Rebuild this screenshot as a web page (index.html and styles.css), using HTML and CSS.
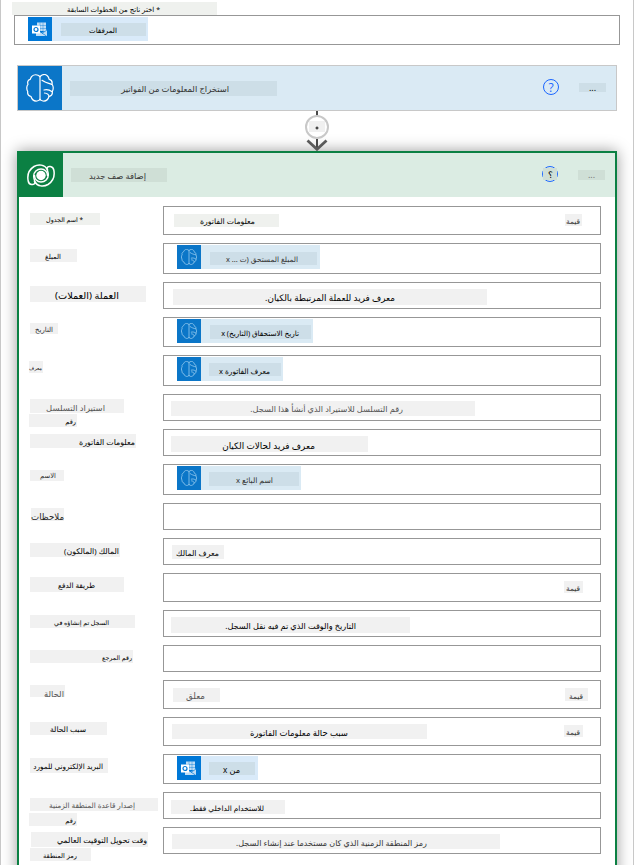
FILE: index.html
```html
<!DOCTYPE html>
<html lang="ar">
<head>
<meta charset="utf-8">
<title>إضافة صف جديد</title>
<link rel="stylesheet" href="styles.css">
</head>
<body>
<svg class="defs" width="0" height="0">
  <defs>
    <symbol id="brain" viewBox="0 0 28 28">
      <g fill="none" stroke="currentColor" stroke-linecap="round" stroke-linejoin="round">
        <path d="M14 2.500V26"/>
        <path d="M14 2.500C11.500.2 8 .2 6 2.200 4.800 3.300 4.600 4.700 4.200 5.300 1.800 6 1.200 8 2 10.300.4 12 .4 15.500 1.800 17.700 1.200 20 2.500 21.800 5 22.500 6 26 8.500 27.300 11 27 12.600 26.700 13.400 26.300 14 25.300"/>
        <path d="M14 2.500C16.500.2 19.500.2 21.300 1.800 23 3.300 23 4.500 23 5.200 25.800 6 26.500 8 26 10.300 27.600 12 27.600 15.500 26.200 17.700 26.800 20 25.500 21.800 23 22.500 22 26 19.500 27.300 17 27 15.400 26.700 14.600 26.300 14 25.300"/>
        <path d="M16 6.300C19 8.500 22 9.200 26 10.300M26.200 17.700C23 15.500 20.500 15.300 18 16M23 22.500C22.800 20.300 21 19.200 18.500 19"/>
      </g>
    </symbol>
    <symbol id="outlook" viewBox="0 0 16 15">
      <path d="M5 .5H14V9H5Z" fill="#fff" fill-opacity=".75"/>
      <path d="M5 3.500H14M5 6.500H14M8 .5V9M11 .5V9" stroke="#0078d7" stroke-width=".4"/>
      <path d="M4 8 9.500 11 15 7.500V14H4Z" fill="#fff" fill-opacity=".75"/>
      <path d="M9.500 10.800 14.500 14M15 8 10 11.300" stroke="#0078d7" stroke-width=".7"/>
      <path d="M0 3.500H8V11.500H0Z" fill="#fff"/>
      <circle cx="4" cy="7.500" r="2" fill="none" stroke="#0078d7" stroke-width="1.200"/>
    </symbol>
  </defs>
</svg>

<main class="frame">
  <div class="chip top">* اختر ناتج من الخطوات السابقة</div>
  <div class="input picker">
    <div class="token mail">
      <span class="icon"><svg class="mail-glyph"><use href="#outlook"/></svg></span>
      <div class="chip att">المرفقات</div>
    </div>
  </div>

  <section class="card extract">
    <header class="head">
      <span class="logo"><svg class="logo-glyph"><use href="#brain"/></svg></span>
      <div class="chip c1">استخراج المعلومات من الفواتير</div>
      <span class="help">?</span>
      <div class="more">...</div>
    </header>
  </section>

  <div class="arrow">
    <svg width="24" height="40" viewBox="0 0 24 40">
      <path d="M12 0V5M12 28V38" stroke="#484848" stroke-width="2"/>
      <path d="M2.500 29.500 12 38.300 21.500 29.500" fill="none" stroke="#5a5a5a" stroke-width="2.800"/>
      <circle cx="12" cy="16" r="11" fill="#fff" stroke="#c8c8c8" stroke-width="2"/>
      <path d="M4 10H20V21H4Z" fill="#f0f0f0"/>
      <path d="M12 15.500V18.500M10.500 17H13.500" stroke="#111" stroke-width="1"/>
    </svg>
  </div>

  <section class="card addrow">
    <header class="head">
      <span class="logo">
        <svg width="28" height="23" viewBox="0 0 28 23" fill="none" stroke="#fff" stroke-width="1.500" stroke-linecap="round" stroke-linejoin="round">
          <path d="M20.500 5.500C17.500.5 11.500-.2 7 2.500 1.500 6 .2 12 1.200 17 2 21.500 7.500 21.500 8 18.500 8.100 17 6.700 15.500 6.700 12 6.700 8 10 5 14 5 18 5 20.500 8 20.500 11.500"/>
          <path d="M7.500 17.500C10.500 22.500 16.500 23.200 21 20.500 26.500 17 27.800 11 26.800 6 26 1.500 20.500 1.500 20 4.500 19.900 6 21.300 7.500 21.300 11 21.300 15 18 18 14 18 10 18 7.500 15 7.500 11.500"/>
          <circle cx="14" cy="11.500" r="4.700" fill="#fff" stroke="none"/>
        </svg>
      </span>
      <div class="chip c2">إضافة صف جديد</div>
      <span class="help veiled"><span>؟</span></span>
      <div class="more">...</div>
    </header>

    <div class="form">
      <div class="row tall">
        <div class="labels"><div class="chip l1">* اسم الجدول</div></div>
        <div class="input"><div class="chip v1">معلومات الفاتورة</div><div class="chip hint q1">قيمة</div></div>
      </div>
      <div class="row token-row">
        <div class="labels"><div class="chip l2">المبلغ</div></div>
        <div class="input"><div class="token k2"><span class="icon"><svg class="brain-glyph"><use href="#brain"/></svg></span><div class="chip v2">المبلغ المستحق (ت ... x</div></div></div>
      </div>
      <div class="row">
        <div class="labels"><div class="chip l3">العملة (العملات)</div></div>
        <div class="input"><div class="chip v3">معرف فريد للعملة المرتبطة بالكيان.</div></div>
      </div>
      <div class="row mid">
        <div class="labels"><div class="chip l4">التاريخ</div></div>
        <div class="input"><div class="token k4"><span class="icon"><svg class="brain-glyph"><use href="#brain"/></svg></span><div class="chip v4">تاريخ الاستحقاق (التاريخ) x</div></div></div>
      </div>
      <div class="row token-row">
        <div class="labels"><div class="chip l5">معرف</div></div>
        <div class="input"><div class="token k5"><span class="icon"><svg class="brain-glyph"><use href="#brain"/></svg></span><div class="chip v5">معرف الفاتورة x</div></div></div>
      </div>
      <div class="row">
        <div class="labels"><div class="chip l6 soft">استيراد التسلسل</div><div class="chip number">رقم</div></div>
        <div class="input"><div class="chip v6 soft">رقم التسلسل للاستيراد الذي أنشأ هذا السجل.</div></div>
      </div>
      <div class="row">
        <div class="labels"><div class="chip l7">معلومات الفاتورة</div></div>
        <div class="input"><div class="chip v7">معرف فريد لحالات الكيان</div></div>
      </div>
      <div class="row token-row">
        <div class="labels"><div class="chip l8">الاسم</div></div>
        <div class="input"><div class="token k8"><span class="icon"><svg class="brain-glyph"><use href="#brain"/></svg></span><div class="chip v8">اسم البائع x</div></div></div>
      </div>
      <div class="row">
        <div class="labels"><div class="chip l9">ملاحظات</div></div>
        <div class="input"></div>
      </div>
      <div class="row">
        <div class="labels"><div class="chip l10">المالك (المالكون)</div></div>
        <div class="input"><div class="chip v10">معرف المالك</div></div>
      </div>
      <div class="row tall">
        <div class="labels"><div class="chip l11">طريقة الدفع</div></div>
        <div class="input"><div class="chip hint q2">قيمة</div></div>
      </div>
      <div class="row">
        <div class="labels"><div class="chip l12">السجل تم إنشاؤه في</div></div>
        <div class="input"><div class="chip v12">التاريخ والوقت الذي تم فيه نقل السجل.</div></div>
      </div>
      <div class="row">
        <div class="labels"><div class="chip l13">رقم المرجع</div></div>
        <div class="input"></div>
      </div>
      <div class="row tall">
        <div class="labels"><div class="chip l14 soft">الحالة</div></div>
        <div class="input"><div class="chip v14 soft">معلق</div><div class="chip hint q3">قيمة</div></div>
      </div>
      <div class="row tall">
        <div class="labels"><div class="chip l15">سبب الحالة</div></div>
        <div class="input"><div class="chip v15">سبب حالة معلومات الفاتورة</div><div class="chip hint q2">قيمة</div></div>
      </div>
      <div class="row mid">
        <div class="labels"><div class="chip l16">البريد الإلكتروني للمورد</div></div>
        <div class="input"><div class="token mail k16"><span class="icon"><svg class="mail-glyph"><use href="#outlook"/></svg></span><div class="chip v16">من x</div></div></div>
      </div>
      <div class="row">
        <div class="labels"><div class="chip l17 soft">إصدار قاعدة المنطقة الزمنية</div><div class="chip number low">رقم</div></div>
        <div class="input"><div class="chip v17">للاستخدام الداخلي فقط.</div></div>
      </div>
      <div class="row">
        <div class="labels"><div class="chip l18">وقت تحويل التوقيت العالمي</div><div class="chip l18b">رمز المنطقة</div></div>
        <div class="input"><div class="chip v18">رمز المنطقة الزمنية الذي كان مستخدما عند إنشاء السجل.</div></div>
      </div>
    </div>
  </section>
</main>
</body>
</html>
```
FILE: styles.css
```css
* { box-sizing: border-box; }
html, body { margin: 0; height: 865px; overflow: hidden; background: #fff; }
body { font-family: "Noto Sans", "DejaVu Sans", sans-serif; color: #000; }
.defs { display: block; }

.frame {
  width: 634px;
  height: 865px;
  overflow: hidden;
  padding-top: 2px;
  border: solid #c8c8c8;
  border-width: 0 1px;
}

/* Text plates: w/h size, x/t offset, r right inset of the text, d text drop, f font size */
.chip {
  --x: 0px;
  --t: 0px;
  --d: 3px;
  flex: none;
  width: var(--w);
  height: var(--h);
  margin: var(--t) 0 0 var(--x);
  padding-right: var(--r);
  background: #f1f1f1;
  direction: rtl;
  white-space: nowrap;
  font-size: var(--f);
  line-height: calc(var(--h) + var(--d));
}
.soft { color: #555; }
.top { --w: 205px; --h: 13px; --x: 11px; --r: 57px; --f: 7px; --d: 2px; background: #eff1ee; }

.input {
  display: flex;
  align-items: flex-start;
  border: 1px solid #979797;
  background: #fff;
}
.picker { width: 606px; height: 30px; margin-left: 13px; padding: 1px 0 0 13px; }

.token { display: flex; height: 24px; background: #daeaf4; }
.token .icon {
  display: flex;
  align-items: center;
  justify-content: center;
  width: 24px;
  height: 24px;
  background: #0b76c8;
  color: #8cc4ec;
}
.token .chip { background: #cddee8; }
.token.mail { width: 120px; background: #d9eaf9; }
.token.mail .icon { background: #0078d7; }
.mail-glyph { width: 16px; height: 15px; }
.brain-glyph { width: 16px; height: 16px; stroke-width: 1.5; }
.att { --w: 85px; --h: 13px; --x: 9px; --t: 6px; --r: 29px; --f: 7.1px; --d: 2px; }

.card { width: 600px; margin-left: 16px; }
.head { display: flex; align-items: flex-start; height: 44px; }
.logo { display: flex; align-items: center; justify-content: center; width: 44px; height: 44px; color: #fff; }
.logo-glyph { width: 28px; height: 28px; stroke-width: 1.2; }
.extract { height: 46px; margin-top: 20px; border: 1px solid #c8c8c8; background: #daeaf4; }
.extract .logo { background: #0b76c8; }
.extract .chip, .extract .more { background: #cddee7; }
.c1 { --w: 207px; --h: 15px; --x: 8px; --t: 15px; --r: 48px; --f: 8.37px; --d: 1px; color: #333; }

.help {
  display: flex;
  align-items: center;
  justify-content: center;
  width: 16px;
  height: 16px;
  margin: 13px 0 0 auto;
  border: 1.5px solid #1a66ff;
  border-radius: 50%;
  color: #1a66ff;
  font: 12px "Open Sans", sans-serif;
}
.more {
  width: 27px;
  height: 9px;
  margin: 17px 10px 0 20px;
  font-size: 9px;
  line-height: 10px;
  text-align: center;
}

.arrow { height: 40px; margin-left: 304px; }
.arrow svg { display: block; }

.addrow {
  height: 730px;
  border: 2px solid #0b8043;
  background: #fff;
  box-shadow: 0 0 14px rgba(0, 0, 0, .4);
}
.addrow .head { background: #dbece3; }
.addrow .logo { background: #0b8043; }
.addrow .head .chip, .addrow .more { background: #cfdfd6; }
.addrow .more { height: 10px; color: #777; }
.c2 { --w: 96px; --h: 14px; --x: 8px; --t: 15px; --r: 21px; --f: 8.39px; --d: 1px; color: #333; }
.veiled { color: #000; font-size: 9px; }
.veiled span { flex: none; width: 14px; height: 12px; background: #cfdfd6; line-height: 14px; text-align: center; }

.form { display: flex; flex-direction: column; gap: 8px; padding: 9px 0 0 11px; }
.row { display: grid; grid-template-columns: 133px 438px; grid-template-rows: 100%; height: 27px; }
.row.tall { height: 29px; }
.row.mid { height: 30px; }
.row.token-row { height: 31px; }
.row .token { margin: 1px 0 0 13px; }

.l1 { --w: 70px; --h: 12px; --t: 7px; --r: 17px; --f: 6.36px; --d: 1px; background: #eff1ee; }
.l2 { --w: 47px; --h: 13px; --t: 6px; --r: 16px; --f: 6.88px; --d: 2px; }
.l3 { --w: 116px; --h: 16px; --t: 4px; --r: 27px; --f: 9.77px; }
.l4 { --w: 28px; --h: 11px; --t: 6px; --r: 5px; --f: 6.93px; color: #333; }
.l5 { --w: 14px; --h: 12px; --t: 6px; --x: -1px; --r: 1px; --f: 4.99px; --d: 2px; }
.l6 { --w: 94px; --h: 14px; --t: 5px; --r: 19px; --f: 8.41px; }
.number { --w: 48px; --h: 13px; --x: -1px; --t: 1px; --r: 1px; --f: 6.6px; }
.number.low { --t: 2px; --d: 2px; }
.l7 { --w: 106px; --h: 14px; --t: 5px; --r: 1px; --f: 7.88px; }
.l8 { --w: 34px; --h: 11px; --t: 6px; --r: 8px; --f: 6.8px; --d: 1px; color: #333; }
.l9 { --w: 33px; --h: 13px; --t: 5px; --x: 1px; --r: 0px; --f: 8.65px; --d: 5px; color: #222; }
.l10 { --w: 90px; --h: 14px; --t: 5px; --r: 1px; --f: 7.8px; }
.l11 { --w: 94px; --h: 15px; --t: 4px; --r: 29px; --f: 7.33px; --d: 2px; }
.l12 { --w: 105px; --h: 13px; --t: 5px; --r: 26px; --f: 6.34px; --d: 2px; }
.l13 { --w: 103px; --h: 13px; --t: 5px; --r: 1px; --f: 6.32px; --d: 2px; }
.l14 { --w: 35px; --h: 12px; --t: 5px; --r: 1px; --f: 8.42px; --d: 5px; }
.l15 { --w: 77px; --h: 13px; --t: 5px; --r: 21px; --f: 7.57px; --d: 2px; }
.l16 { --w: 78px; --h: 15px; --t: 4px; --r: 5px; --f: 7.31px; --d: 2px; }
.l17 { --w: 128px; --h: 13px; --t: 6px; --r: 23px; --f: 7.32px; --d: 2px; }
.l18 { --w: 117px; --h: 15px; --t: 5px; --x: 1px; --r: 1px; --f: 7.86px; --d: 2px; }
.l18b { --w: 61px; --h: 13px; --t: 1px; --r: 14px; --f: 6.59px; }

.k2 { width: 143px; }
.k4 { width: 136px; }
.k5 { width: 106px; }
.k8 { width: 124px; }
.token.k16 { width: 81px; }

.v1 { --w: 105px; --h: 13px; --x: 10px; --t: 7px; --r: 24px; --f: 7.74px; --d: 2px; background: #eff1ee; }
.v2 { --w: 107px; --h: 13px; --x: 9px; --t: 7px; --r: 19px; --f: 7.37px; --d: 2px; color: #333; }
.v3 { --w: 314px; --h: 16px; --x: 9px; --t: 6px; --r: 92px; --f: 8.82px; }
.v4 { --w: 101px; --h: 14px; --x: 9px; --t: 6px; --r: 12px; --f: 7.28px; --d: 2px; }
.v5 { --w: 72px; --h: 13px; --x: 8px; --t: 6px; --r: 11px; --f: 7.44px; }
.v6 { --w: 304px; --h: 15px; --x: 7px; --t: 6px; --r: 72px; --f: 8.19px; --d: 1px; }
.v7 { --w: 197px; --h: 16px; --x: 7px; --t: 6px; --r: 53px; --f: 8.89px; }
.v8 { --w: 90px; --h: 14px; --x: 8px; --t: 6px; --r: 26px; --f: 7.66px; --d: 2px; color: #333; }
.v10 { --w: 52px; --h: 14px; --x: 8px; --t: 6px; --r: 5px; --f: 7.85px; }
.v12 { --w: 239px; --h: 16px; --x: 7px; --t: 6px; --r: 54px; --f: 8.17px; --d: 1px; }
.v14 { --w: 47px; --h: 14px; --x: 9px; --t: 7px; --r: 15px; --f: 8.7px; }
.v15 { --w: 255px; --h: 15px; --x: 8px; --t: 6px; --r: 79px; --f: 8.52px; }
.v16 { --w: 46px; --h: 13px; --x: 8px; --t: 6px; --r: 15px; --f: 8.14px; }
.v17 { --w: 114px; --h: 14px; --x: 7px; --t: 7px; --r: 21px; --f: 7.4px; --d: 2px; }
.v18 { --w: 328px; --h: 15px; --x: 8px; --t: 6px; --r: 73px; --f: 8.05px; --d: 2px; color: #333; }

.hint { --w: 19px; --h: 12px; --t: 7px; --r: 3px; --f: 7.39px; margin-left: auto; color: #333; }
.q1 { --w: 17px; --r: 2px; margin-right: 18px; }
.q2 { margin-right: 17px; }
.q3 { --w: 23px; --h: 13px; --r: 5px; margin-right: 12px; }
```
